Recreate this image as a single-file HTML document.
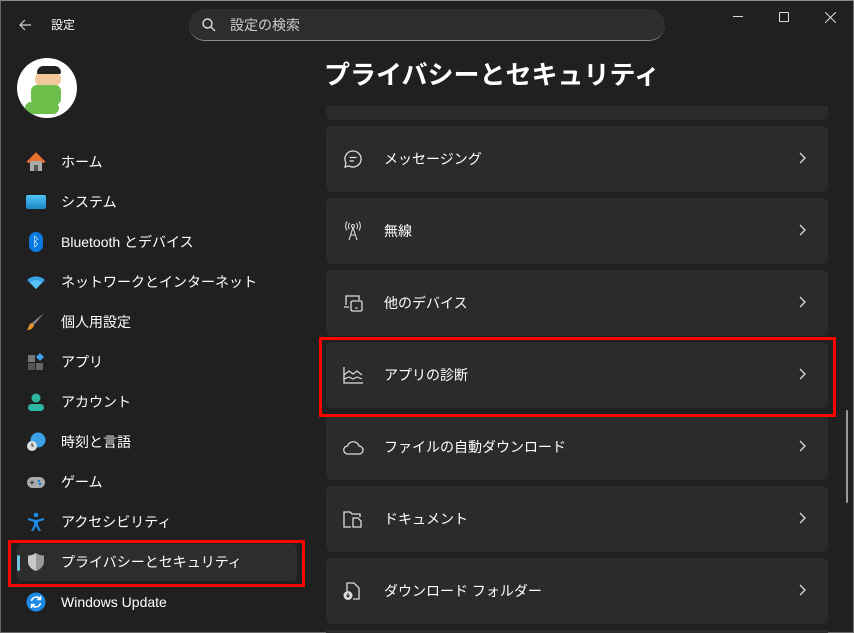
<!DOCTYPE html>
<html><head><meta charset="utf-8"><style>
*{margin:0;padding:0;box-sizing:border-box}
body{width:854px;height:633px;background:#202020;overflow:hidden;position:relative;font-family:"Liberation Sans","Noto Sans CJK JP",sans-serif;color:#fff}
.win{position:absolute;left:0;top:0;width:854px;height:633px;border:1px solid #6a6a6a;border-top-color:#8a8a8a}
.a{position:absolute}
.nav{position:absolute;left:61px;font-size:14px;color:#fff;line-height:20px}
.ic{position:absolute;left:26px;width:20px;height:20px}
.card{position:absolute;left:326px;width:502px;height:66px;background:#2b2b2b;border-radius:5px}
.card .t{position:absolute;left:58px;top:23px;font-size:14px;line-height:20px}
.card .chev{position:absolute;left:472px;top:26px}
.card svg.i{position:absolute;left:16px;top:23px}
</style></head><body>
<div class="win"></div>
<!-- title bar -->
<svg class="a" style="left:17px;top:17px" width="16" height="16" viewBox="0 0 16 16"><path d="M14 8H3M8 3L3 8l5 5" stroke="#ccc" stroke-width="1.2" fill="none"/></svg>
<div class="a" style="left:51px;top:16px;font-size:12px;line-height:18px">設定</div>
<div class="a" style="left:189px;top:9px;width:476px;height:32px;background:#2d2d2d;border-radius:16px;border-bottom:1px solid #8a8a8a"></div>
<svg class="a" style="left:201px;top:17px" width="16" height="16" viewBox="0 0 16 16"><circle cx="6.5" cy="6.5" r="4.5" stroke="#ddd" stroke-width="1.4" fill="none"/><path d="M10 10l4 4" stroke="#ddd" stroke-width="1.4"/></svg>
<div class="a" style="left:230px;top:15px;font-size:14px;line-height:20px;color:#ccc">設定の検索</div>
<div class="a" style="left:733px;top:16px;width:10px;height:1px;background:#ddd"></div>
<div class="a" style="left:779px;top:12px;width:10px;height:10px;border:1px solid #ddd;border-radius:1px"></div>
<svg class="a" style="left:825px;top:12px" width="11" height="11" viewBox="0 0 11 11"><path d="M0 0L11 11M11 0L0 11" stroke="#ddd" stroke-width="1"/></svg>
<!-- avatar -->
<div class="a" style="left:17px;top:58px;width:60px;height:60px;border-radius:50%;background:#fff;overflow:hidden">
 <div class="a" style="left:18px;top:11px;width:26px;height:20px;border-radius:50%;background:#f2c79a"></div>
 <div class="a" style="left:20px;top:8px;width:24px;height:8px;border-radius:8px 8px 2px 2px;background:#222"></div>
 <div class="a" style="left:14px;top:27px;width:30px;height:20px;border-radius:6px;background:#6bbf4a"></div>
 <div class="a" style="left:8px;top:44px;width:34px;height:12px;border-radius:6px;background:#6bbf4a"></div>
</div>
<!-- nav -->
<svg class="ic" style="top:152px" viewBox="0 0 20 20"><path d="M2 10L10 2l8 8" fill="#e8702a"/><path d="M4 9h12v10H4z" fill="#aaa"/><path d="M8 13h4v6H8z" fill="#555"/><path d="M1.5 10.5L10 2l8.5 8.5" stroke="#e8702a" stroke-width="2.5" fill="none"/></svg>
<div class="nav" style="top:152px">ホーム</div>
<div class="ic" style="top:195px;height:14px;background:linear-gradient(#4fc3f7,#1e88c8);border-radius:2px"></div>
<div class="nav" style="top:192px">システム</div>
<div class="ic" style="top:232px;left:29px;width:14px;height:20px;background:#0a7ae0;border-radius:7px;color:#fff;font-size:13px;text-align:center;line-height:20px">ᛒ</div>
<div class="nav" style="top:232px">Bluetooth とデバイス</div>
<svg class="ic" style="top:272px" viewBox="0 0 20 20"><path d="M1 8a13 13 0 0 1 18 0L10 17z" fill="#3aa0e8"/><path d="M4 10.5a9 9 0 0 1 12 0L10 17z" fill="#59c2f7"/></svg>
<div class="nav" style="top:272px">ネットワークとインターネット</div>
<svg class="ic" style="top:312px" viewBox="0 0 20 20"><path d="M18 1L8 13l-2-2z" fill="#8a8a8a"/><path d="M6 11l2 2c-1 4-4 5-7 5 2-2 1-6 5-7z" fill="#e8902a"/></svg>
<div class="nav" style="top:312px">個人用設定</div>
<svg class="ic" style="top:352px" viewBox="0 0 20 20"><rect x="2" y="3" width="7" height="7" fill="#777"/><rect x="2" y="11" width="7" height="7" fill="#555"/><rect x="10" y="11" width="7" height="7" fill="#666"/><path d="M14 1l4 4-4 4-4-4z" fill="#3aa0e8"/></svg>
<div class="nav" style="top:352px">アプリ</div>
<svg class="ic" style="top:392px" viewBox="0 0 20 20"><circle cx="10" cy="6" r="4.5" fill="#2bb7a0"/><rect x="2" y="12" width="16" height="7" rx="3.5" fill="#2bb7a0"/></svg>
<div class="nav" style="top:392px">アカウント</div>
<svg class="ic" style="top:432px" viewBox="0 0 20 20"><circle cx="12" cy="8" r="7.5" fill="#3aa0e8"/><circle cx="6" cy="14" r="5" fill="#ddd"/><path d="M6 11v3h2" stroke="#333" stroke-width="1" fill="none"/></svg>
<div class="nav" style="top:432px">時刻と言語</div>
<svg class="ic" style="top:472px" viewBox="0 0 20 20"><rect x="1" y="5" width="18" height="11" rx="5.5" fill="#aaa"/><circle cx="13" cy="9" r="1.3" fill="#1a7fd6"/><circle cx="14" cy="12" r="1.3" fill="#1a7fd6"/><path d="M4 10.5h4M6 8.5v4" stroke="#333" stroke-width="1"/></svg>
<div class="nav" style="top:472px">ゲーム</div>
<svg class="ic" style="top:512px" viewBox="0 0 20 20"><circle cx="10" cy="3" r="2.3" fill="#1a8ae6"/><path d="M2 6l8 2 8-2v2l-6 2v3l3 6h-2.5L10 14l-2.5 5H5l3-6v-3L2 8z" fill="#1a8ae6"/></svg>
<div class="nav" style="top:512px">アクセシビリティ</div>
<div class="a" style="left:17px;top:544px;width:280px;height:37px;background:#2d2d2d;border-radius:5px"></div>
<div class="a" style="left:17px;top:555px;width:3px;height:16px;background:#6fc4de;border-radius:2px"></div>
<svg class="ic" style="top:552px" viewBox="0 0 20 20"><path d="M10 1c3 2 5 2.5 8 2.5v6c0 5-4 8-8 9.5-4-1.5-8-4.5-8-9.5v-6c3 0 5-.5 8-2.5z" fill="#9a9a9a"/><path d="M10 1v18c-4-1.5-8-4.5-8-9.5v-6c3 0 5-.5 8-2.5z" fill="#c8c8c8"/></svg>
<div class="nav" style="top:552px">プライバシーとセキュリティ</div>
<div class="a" style="left:8px;top:540px;width:297px;height:47px;border:3px solid #f00"></div>
<svg class="ic" style="top:592px" viewBox="0 0 20 20"><circle cx="10" cy="10" r="9.5" fill="#1a8ae6"/><path d="M5.5 9a4.8 4.8 0 0 1 8.5-2M14.5 11a4.8 4.8 0 0 1-8.5 2" stroke="#fff" stroke-width="1.6" fill="none"/><path d="M14.5 4v3.5H11M5.5 16v-3.5H9" stroke="#fff" stroke-width="1.6" fill="none"/></svg>
<div class="nav" style="top:592px">Windows Update</div>
<!-- content -->
<div class="a" style="left:324px;top:58px;font-size:26px;font-weight:bold;line-height:34px">プライバシーとセキュリティ</div>
<div class="a" style="left:326px;top:106px;width:502px;height:14px;background:#2b2b2b;border-radius:0 0 5px 5px"></div>

<div class="card" style="top:126px"><svg class="i" width="22" height="20" viewBox="0 0 22 20"><path d="M11 2a8 8 0 1 1-3.8 15L3 18l1-4A8 8 0 0 1 11 2z" stroke="#ddd" stroke-width="1.3" fill="none"/><path d="M7.5 8.5h7M7.5 12h4.5" stroke="#ddd" stroke-width="1.3"/></svg><div class="t">メッセージング</div><svg class="chev" width="8" height="12" viewBox="0 0 8 12"><path d="M2 1l5 5-5 5" stroke="#ddd" stroke-width="1.3" fill="none"/></svg></div>
<div class="card" style="top:198px"><svg class="i" width="22" height="20" viewBox="0 0 22 20"><circle cx="11" cy="5" r="1.5" stroke="#ddd" fill="none"/><path d="M7.5 2a5 5 0 0 0 0 6M14.5 2a5 5 0 0 1 0 6M5 0.5a8 8 0 0 0 0 9M17 0.5a8 8 0 0 1 0 9M11 6.5L7 19M11 6.5l4 12.5M8.5 14h5" stroke="#ddd" stroke-width="1.1" fill="none"/></svg><div class="t">無線</div><svg class="chev" width="8" height="12" viewBox="0 0 8 12"><path d="M2 1l5 5-5 5" stroke="#ddd" stroke-width="1.3" fill="none"/></svg></div>
<div class="card" style="top:270px"><svg class="i" width="22" height="20" viewBox="0 0 22 20"><path d="M4 12V3h13v4M2 14h5" stroke="#ddd" stroke-width="1.3" fill="none"/><rect x="9" y="8" width="11" height="10" rx="1.5" stroke="#ddd" stroke-width="1.3" fill="none"/><path d="M13 15h3" stroke="#ddd"/></svg><div class="t">他のデバイス</div><svg class="chev" width="8" height="12" viewBox="0 0 8 12"><path d="M2 1l5 5-5 5" stroke="#ddd" stroke-width="1.3" fill="none"/></svg></div>
<div class="card" style="top:342px"><svg class="i" width="22" height="20" viewBox="0 0 22 20"><path d="M2 2v16h19" stroke="#ddd" stroke-width="1.3" fill="none"/><path d="M2 10l5-4 4 3 4-3 5 4M2 14l5-2 4 2 4-2 5 2" stroke="#ddd" stroke-width="1.2" fill="none"/></svg><div class="t">アプリの診断</div><svg class="chev" width="8" height="12" viewBox="0 0 8 12"><path d="M2 1l5 5-5 5" stroke="#ddd" stroke-width="1.3" fill="none"/></svg></div>
<div class="card" style="top:414px"><svg class="i" width="22" height="20" viewBox="0 0 22 20"><path d="M6 17a4 4 0 0 1-.5-8A6 6 0 0 1 17 9a4 4 0 0 1 0 8z" stroke="#ddd" stroke-width="1.3" fill="none"/></svg><div class="t">ファイルの自動ダウンロード</div><svg class="chev" width="8" height="12" viewBox="0 0 8 12"><path d="M2 1l5 5-5 5" stroke="#ddd" stroke-width="1.3" fill="none"/></svg></div>
<div class="card" style="top:486px"><svg class="i" width="22" height="20" viewBox="0 0 22 20"><path d="M9 18H2V3h6l2 2h8v3" stroke="#ddd" stroke-width="1.3" fill="none"/><path d="M11 9h5l3 3v6h-8z" stroke="#ddd" stroke-width="1.3" fill="none"/></svg><div class="t">ドキュメント</div><svg class="chev" width="8" height="12" viewBox="0 0 8 12"><path d="M2 1l5 5-5 5" stroke="#ddd" stroke-width="1.3" fill="none"/></svg></div>
<div class="card" style="top:558px"><svg class="i" width="22" height="20" viewBox="0 0 22 20"><path d="M5 10V2h7l5 5v11h-6" stroke="#ddd" stroke-width="1.3" fill="none"/><circle cx="6" cy="14.5" r="4.5" fill="#ddd"/><path d="M6 12v4M4.5 14.5L6 16l1.5-1.5" stroke="#2b2b2b" stroke-width="1.1" fill="none"/></svg><div class="t">ダウンロード フォルダー</div><svg class="chev" width="8" height="12" viewBox="0 0 8 12"><path d="M2 1l5 5-5 5" stroke="#ddd" stroke-width="1.3" fill="none"/></svg></div>
<div class="a" style="left:326px;top:630px;width:502px;height:3px;background:#2b2b2b"></div>

<div class="a" style="left:319px;top:337px;width:517px;height:80px;border:3px solid #f00"></div>
<div class="a" style="left:846px;top:410px;width:2px;height:93px;background:#9a9a9a;border-radius:1px"></div>
</body></html>
